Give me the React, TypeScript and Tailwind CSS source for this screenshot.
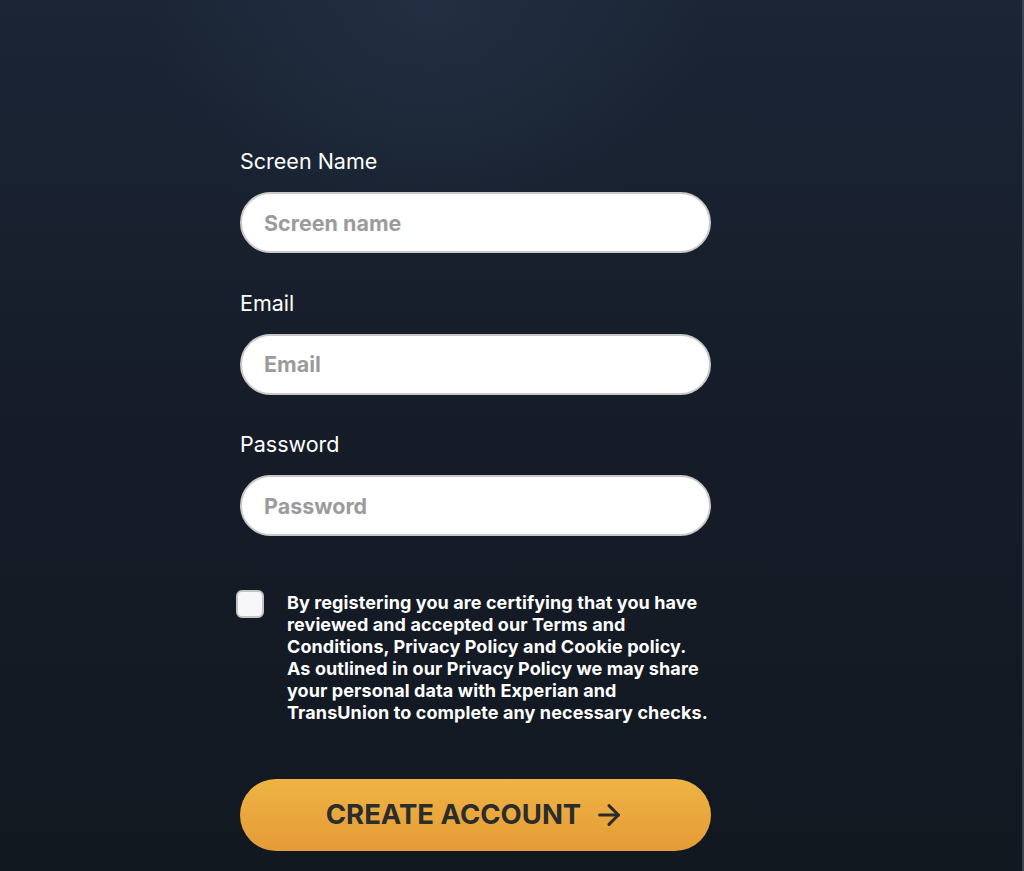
import { ArrowRight } from "lucide-react";

const fields = [
  { label: "Screen Name", placeholder: "Screen name", type: "text" },
  { label: "Email", placeholder: "Email", type: "email" },
  { label: "Password", placeholder: "Password", type: "password" },
];

export default function App() {
  return (
    <div
      className="relative min-h-[871px] w-full overflow-hidden border-r-2 border-[#3b4452] bg-[linear-gradient(180deg,#1b2536_0%,#161d29_45%,#121820_100%)]"
      style={{ fontFamily: "Inter, 'Noto Sans', sans-serif" }}
    >
      <div className="pointer-events-none absolute left-[150px] top-[-260px] h-[520px] w-[560px] rounded-full bg-[radial-gradient(closest-side,rgba(40,58,78,0.5),rgba(40,58,78,0))]" />
      <div className="relative ml-[240px] w-[471px] pt-[146px]">
        <div className="flex flex-col gap-[34.5px]">
          {fields.map((f) => (
            <div key={f.label} className="flex flex-col gap-[16px]">
              <label className="text-[21.5px] leading-[30px] text-white">{f.label}</label>
              <input
                type={f.type}
                placeholder={f.placeholder}
                className="h-[61px] w-full rounded-full border-2 border-[#c9c9c9] bg-white px-[22px] text-[21.5px] font-bold text-gray-800 outline-none placeholder:text-[#9b9b9b]"
              />
            </div>
          ))}
        </div>

        <div className="mt-[54px] flex gap-[23px]">
          <input
            type="checkbox"
            className="-ml-[4px] mt-[0px] h-[28px] w-[28px] shrink-0 appearance-none rounded-[6px] border-2 border-[#c4c4c4] bg-[#f7f7f9]"
          />
          <p className="mt-[2px] w-[424px] text-[18px] font-bold leading-[22px] tracking-[0.1px] text-white">
            By registering you are certifying that you have reviewed and accepted our Terms and
            Conditions, Privacy Policy and Cookie policy. As outlined in our Privacy Policy we may
            share your personal data with Experian and TransUnion to complete any necessary checks.
          </p>
        </div>

        <button
          type="button"
          className="mt-[55px] flex h-[72px] w-full items-center justify-center gap-[12px] rounded-full bg-[linear-gradient(180deg,#efb444,#e59b37)] text-[27.5px] font-bold text-[#2a2d2c]"
        >
          CREATE ACCOUNT
          <ArrowRight className="h-[32px] w-[32px]" strokeWidth={2.3} />
        </button>
      </div>
    </div>
  );
}
